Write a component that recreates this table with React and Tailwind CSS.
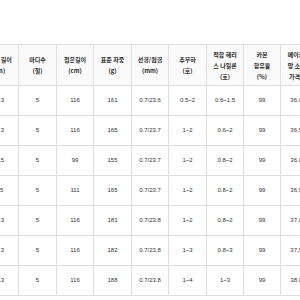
import React from "react";

const headers = [
  ["전체 길이", "(m)"],
  ["마디수", "(절)"],
  ["접은길이", "(cm)"],
  ["표준 자중", "(g)"],
  ["선경/원경", "(mm)"],
  ["추부하", "(호)"],
  ["적합 해리", "스 나일론", "(호)"],
  ["카본", "함유율", "(%)"],
  ["메이커 희", "망 소비자", "가격(원)"],
];

const rows = [
  ["5.3", "5", "116", "161", "0.7/23.6", "0.5~2", "0.6~1.5", "99", "36,000"],
  ["5.3", "5", "116", "165", "0.7/23.7", "1~2", "0.6~2", "99", "36,500"],
  ["4.5", "5", "99", "155", "0.7/23.7", "1~2", "0.8~2", "99", "36,000"],
  ["45", "5", "111", "165", "0.7/23.7", "1~2", "0.8~2", "99", "36,500"],
  ["5.3", "5", "116", "181", "0.7/23.8", "1~2", "0.8~2", "99", "37,000"],
  ["5.3", "5", "116", "182", "0.7/23.8", "1~3", "0.8~3", "99", "37,500"],
  ["5.3", "5", "116", "188", "0.7/23.8", "1~4", "1~3", "99", "38,000"],
];

export default function App() {
  return (
    <div className="w-[300px] h-[300px] overflow-hidden bg-white font-['Liberation_Sans','Noto_Sans_CJK_KR',sans-serif]">
      <div className="pt-[44px] ml-[-18px]">
        <div className="grid w-max grid-cols-[37px_38px_37px_38px_37px_38px_37px_37px_38px] border-t border-[#dedede]">
          {headers.map((h, i) => (
            <div
              key={"h" + i}
              className="h-[41px] flex flex-col items-center justify-center border-r border-b border-[#dedede] bg-[#fafafa] text-[6px] leading-[11px] font-bold text-[#2a2a2a] whitespace-nowrap overflow-hidden font-['Noto_Sans_CJK_KR','Liberation_Sans',sans-serif]"
            >
              {h.map((l, j) => (
                <span key={j}>{l}</span>
              ))}
            </div>
          ))}
          {rows.map((r, ri) =>
            r.map((c, ci) => (
              <div
                key={ri + "-" + ci}
                className="h-[30px] flex items-center justify-center border-r border-b border-[#dedede] text-[6px] text-[#333] whitespace-nowrap overflow-hidden"
              >
                {c}
              </div>
            ))
          )}
        </div>
      </div>
    </div>
  );
}
